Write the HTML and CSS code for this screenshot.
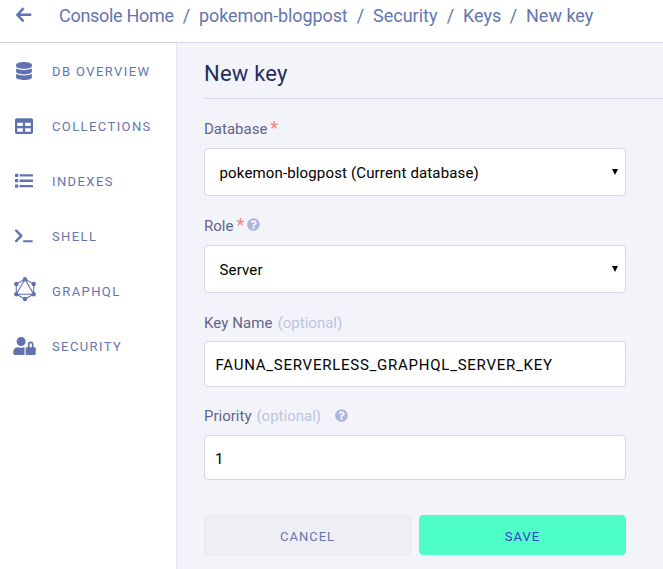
FILE: index.html
```html
<!DOCTYPE html>
<html lang="en">
<head>
<meta charset="utf-8">
<title>New key</title>
<link rel="stylesheet" href="styles.css">
</head>
<body>
<header class="topbar">
  <svg class="back" viewBox="0 0 16 16"><path d="M7.6 1.2 1.3 7.8l6.3 6.6M1.6 7.8H15.2"/></svg>
  <nav class="crumbs">
    <a class="home">Console Home</a><i>/</i><a class="db">pokemon-blogpost</a><i>/</i><a class="sec">Security</a><i>/</i><a class="keys">Keys</a><i>/</i><a class="new">New key</a>
  </nav>
</header>
<div class="body">
  <aside class="sidebar">
    <a class="item"><span class="icon"><svg width="16" height="18" viewBox="0 0 448 512"><path d="M448 73.143v45.714C448 159.143 347.667 192 224 192S0 159.143 0 118.857V73.143C0 32.857 100.333 0 224 0s224 32.857 224 73.143zM448 176v102.857C448 319.143 347.667 352 224 352S0 319.143 0 278.857V176c48.125 33.143 136.208 48.572 224 48.572S399.874 209.143 448 176zm0 160v102.857C448 479.143 347.667 512 224 512S0 479.143 0 438.857V336c48.125 33.143 136.208 48.572 224 48.572S399.874 369.143 448 336z"/></svg></span><span class="label">DB OVERVIEW</span></a>
    <a class="item"><span class="icon"><svg width="18" height="18" viewBox="0 0 512 512"><path d="M464 32H48C21.49 32 0 53.49 0 80v352c0 26.51 21.49 48 48 48h416c26.51 0 48-21.49 48-48V80c0-26.51-21.49-48-48-48zM224 416H64v-96h160v96zm0-160H64v-96h160v96zm224 160H288v-96h160v96zm0-160H288v-96h160v96z"/></svg></span><span class="label">COLLECTIONS</span></a>
    <a class="item"><span class="icon"><svg width="18" height="18" viewBox="0 0 18 18"><rect x="0" y="1.7" width="3.2" height="3.2" rx=".5"/><rect x="0" y="7.1" width="3.2" height="3.2" rx=".5"/><rect x="0" y="12.5" width="3.2" height="3.2" rx=".5"/><rect x="4.5" y="2.2" width="13.5" height="2.3" rx=".5"/><rect x="4.5" y="7.6" width="13.5" height="2.3" rx=".5"/><rect x="4.5" y="13" width="13.5" height="2.3" rx=".5"/></svg></span><span class="label">INDEXES</span></a>
    <a class="item"><span class="icon"><svg class="line" width="20" height="18" viewBox="0 0 20 18"><path d="m2.1 3.5 5.2 5.3-5.2 5.3" stroke-width="2.4"/><path d="M9.9 14.2h8" stroke-width="2"/></svg></span><span class="label">SHELL</span></a>
    <a class="item"><span class="icon"><svg class="graph" width="24" height="26" viewBox="0 0 24 26"><path d="M12 3.2 20.7 8v10.2L12 23l-8.7-4.8V8zM12 3.2 3.3 18.2h17.4z"/><circle cx="12" cy="3.2" r="2.2"/><circle cx="20.7" cy="8" r="2.2"/><circle cx="20.7" cy="18.2" r="2.2"/><circle cx="12" cy="23" r="2.2"/><circle cx="3.3" cy="18.2" r="2.2"/><circle cx="3.3" cy="8" r="2.2"/></svg></span><span class="label">GRAPHQL</span></a>
    <a class="item"><span class="icon"><svg width="23" height="18" viewBox="0 0 640 512"><path d="M224 256A128 128 0 1 0 96 128a128 128 0 0 0 128 128zm96 64a63.08 63.08 0 0 1 8.1-30.5c-4.8-.5-9.5-1.5-14.5-1.5h-16.7a174.08 174.08 0 0 1-145.8 0h-16.7A134.43 134.43 0 0 0 0 422.4V464a48 48 0 0 0 48 48h280.900a63.54 63.54 0 0 1-8.9-32zm288-32h-32v-80a80 80 0 0 0-160 0v80h-32a32 32 0 0 0-32 32v160a32 32 0 0 0 32 32h224a32 32 0 0 0 32-32V320a32 32 0 0 0-32-32zm-80 0h-64v-80a32 32 0 0 1 64 0z"/></svg></span><span class="label">SECURITY</span></a>
  </aside>
  <main class="content">
    <h1>New key</h1>
    <form class="form">
      <div class="caption"><span>Database</span><b class="star">*</b></div>
      <div class="field select"><span>pokemon-blogpost (Current database)</span><svg class="caret" viewBox="0 0 6 6"><path d="M0 0h6L3 6z"/></svg></div>
      <div class="caption"><span>Role</span><b class="star">*</b><svg class="help" viewBox="0 0 512 512"><path d="M504 256c0 136.997-111.043 248-248 248S8 392.997 8 256C8 119.083 119.043 8 256 8s248 111.083 248 248zM262.655 90c-54.497 0-89.255 22.957-116.549 63.758-3.536 5.286-2.353 12.415 2.715 16.258l34.699 26.31c5.205 3.947 12.621 3.008 16.665-2.122 17.864-22.658 30.113-35.797 57.303-35.797 20.429 0 45.698 13.148 45.698 32.958 0 14.976-12.363 22.667-32.534 33.976C247.128 238.528 216 254.941 216 296v4c0 6.627 5.373 12 12 12h56c6.627 0 12-5.373 12-12v-1.333c0-28.462 83.186-29.647 83.186-106.667 0-58.002-60.165-102-116.531-102zM256 338c-25.365 0-46 20.635-46 46 0 25.364 20.635 46 46 46s46-20.636 46-46c0-25.364-20.635-46-46-46z"/></svg></div>
      <div class="field select"><span>Server</span><svg class="caret" viewBox="0 0 6 6"><path d="M0 0h6L3 6z"/></svg></div>
      <div class="caption third"><span class="keyname">Key Name</span><em>(optional)</em></div>
      <div class="field name"><span class="value">FAUNA_SERVERLESS_GRAPHQL_SERVER_KEY</span></div>
      <div class="caption fourth"><span>Priority</span><em>(optional)</em><svg class="help far" viewBox="0 0 512 512"><path d="M504 256c0 136.997-111.043 248-248 248S8 392.997 8 256C8 119.083 119.043 8 256 8s248 111.083 248 248zM262.655 90c-54.497 0-89.255 22.957-116.549 63.758-3.536 5.286-2.353 12.415 2.715 16.258l34.699 26.31c5.205 3.947 12.621 3.008 16.665-2.122 17.864-22.658 30.113-35.797 57.303-35.797 20.429 0 45.698 13.148 45.698 32.958 0 14.976-12.363 22.667-32.534 33.976C247.128 238.528 216 254.941 216 296v4c0 6.627 5.373 12 12 12h56c6.627 0 12-5.373 12-12v-1.333c0-28.462 83.186-29.647 83.186-106.667 0-58.002-60.165-102-116.531-102zM256 338c-25.365 0-46 20.635-46 46 0 25.364 20.635 46 46 46s46-20.636 46-46c0-25.364-20.635-46-46-46z"/></svg></div>
      <div class="field number"><span>1</span></div>
      <div class="actions"><button type="button" class="cancel">CANCEL</button><button type="button" class="save">SAVE</button></div>
    </form>
  </main>
</div>
</body>
</html>
```

FILE: styles.css
```css
* { box-sizing: border-box; }
body {
  margin: 0;
  height: 569px;
  overflow: hidden;
  display: flex;
  flex-direction: column;
  background: #fff;
  color: #6475b1;
  font-family: Roboto, "Liberation Sans", sans-serif;
}
svg { display: block; flex: none; fill: #6272b1; }
.topbar {
  height: 43px;
  flex: none;
  display: flex;
  padding: 0 0 0 16px;
  border-bottom: 1px solid #d6d6e8;
}
.back { width: 16px; height: 16px; margin-top: 7px; fill: none; stroke: #6272b1; stroke-width: 2.4; }
.crumbs { display: flex; margin-left: 27px; font-size: 18px; line-height: 32px; white-space: nowrap; }
.crumbs a { flex: none; }
.crumbs i { width: 25px; flex: none; text-align: center; font-style: normal; }
.home { width: 115px; letter-spacing: -.3px; }
.db { width: 149px; letter-spacing: -.1px; }
.sec { width: 65px; }
.keys { width: 38px; }
.body { flex: 1; display: flex; min-height: 0; }
.sidebar { width: 177px; flex: none; border-right: 1px solid #e6e6ef; }
.item { height: 55px; display: flex; align-items: center; padding-left: 12px; }
.icon { width: 25px; display: flex; justify-content: center; }
.icon svg { margin: 0 1px 0 0; }
.label { margin: 2px 0 0 15px; font-size: 13px; letter-spacing: 1.4px; white-space: nowrap; }
.line { fill: none; stroke: #6272b1; stroke-linecap: round; stroke-linejoin: round; }
.icon .graph { margin: -3px 0 0 0; }
.graph path { fill: none; stroke: #6272b1; stroke-width: 1.1; }
.content { flex: 1; background: #f3f4f9; padding-left: 27px; min-width: 0; }
h1 {
  height: 56px;
  margin: 0;
  border-bottom: 1px solid #d6d6e8;
  color: #272b5d;
  font-size: 22px;
  font-weight: 400;
  letter-spacing: .2px;
  line-height: 62px;
}
.form { width: 422px; }
.caption { height: 49px; padding-top: 20px; display: flex; color: #61648c; font-size: 15px; line-height: 20px; white-space: nowrap; }
.star { margin: -1px 0 0 3px; color: #f78585; font-size: 18px; font-weight: 400; }
.help { width: 13px; height: 13px; margin: 2px 0 0 3px; fill: #aeb7d9; }
.caption em { margin-left: 5px; color: #bcc3e1; font-style: normal; }
.keyname { letter-spacing: .1px; }
.far { margin-left: 14px; margin-top: 3px; }
.third { height: 48px; }
.fourth { height: 48px; padding-top: 19px; }
.field {
  height: 48px;
  display: flex;
  align-items: center;
  padding: 2px 7px 0 14.5px;
  border: 1px solid #d6d6e8;
  border-radius: 4px;
  background: #fff;
  color: #000;
  font-size: 15px;
  letter-spacing: .15px;
  white-space: nowrap;
}
.caret { width: 6px; height: 6px; margin: -3px 0 0 auto; fill: #000; }
.name { height: 46px; padding-left: 10.5px; }
.value { letter-spacing: .75px; }
.number { height: 45px; padding-left: 10px; }
.actions { display: flex; gap: 8px; margin-top: 35px; }
button {
  width: 207px;
  height: 40px;
  padding: 3px 0 0;
  border: 1px solid #e9e9f0;
  border-radius: 4px;
  background: #eeeff5;
  color: #6475b1;
  font: 13px Roboto, "Liberation Sans", sans-serif;
  letter-spacing: 1px;
}
.save { border-color: #4dffc6; background: #4dffc6; color: #3a40c6; }
```
